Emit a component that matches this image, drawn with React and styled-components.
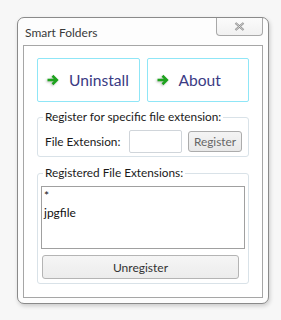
import React from "react";
import styled, { createGlobalStyle } from "styled-components";

const Global = createGlobalStyle`
  html, body { margin: 0; padding: 0; background: #f7f7f7; }
  body { font-family: Lato, "Noto Sans", sans-serif; }
  * { box-sizing: border-box; }
`;

const Page = styled.div`
  width: 281px;
  height: 320px;
  padding: 17px 0 0 17px;
`;

const Window = styled.div`
  width: 252px;
  height: 287px;
  border: 1px solid #8a8a8a;
  border-radius: 7px;
  background: #fdfdfd;
  box-shadow: 1px 2px 4px rgba(0, 0, 0, 0.18);
  display: flex;
  flex-direction: column;
`;

const TitleBar = styled.div`
  height: 27px;
  display: flex;
  justify-content: space-between;
  align-items: flex-start;
  padding: 0 5px 0 7px;
`;

const Title = styled.span`
  font-size: 12px;
  color: #3a3a3a;
  line-height: 27px;
  padding-top: 1px;
`;

const CloseButton = styled.div`
  width: 47px;
  height: 18px;
  border: 1px solid #a8a8a8;
  border-top: none;
  border-radius: 0 0 4px 4px;
  background: linear-gradient(#fbfbfb, #f1f1f1);
  display: flex;
  align-items: center;
  justify-content: center;
`;

const Client = styled.div`
  margin: 0 5px 5px 5px;
  height: 253px;
  border: 1px solid #a6a6a6;
  background: #ffffff;
  padding: 12px 13px 0 13px;
  display: flex;
  flex-direction: column;
`;

const BigButtons = styled.div`
  display: flex;
  gap: 7px;
  height: 44px;
`;

const BigButton = styled.div`
  flex: 1;
  border: 1px solid #8fe6f7;
  border-radius: 2px;
  background: #ffffff;
  display: flex;
  align-items: center;
  padding-left: 8px;
  gap: 10px;
  font-size: 15.6px;
  color: #3b3b84;
`;

const Group = styled.div`
  position: relative;
  border: 1px solid #d9e2e8;
  border-radius: 3px;
  margin-top: ${(p) => p.$top}px;
  height: ${(p) => p.$h}px;
  padding: ${(p) => p.$pad};
  display: flex;
  flex-direction: ${(p) => (p.$col ? "column" : "row")};
  align-items: ${(p) => (p.$col ? "stretch" : "center")};
`;

const Legend = styled.span`
  position: absolute;
  top: -9px;
  left: 5px;
  padding: 0 2px;
  background: #ffffff;
  font-size: 11.8px;
  line-height: 16px;
  color: #1a1a1a;
`;

const Label = styled.span`
  width: 84px;
  font-size: 11.8px;
  color: #1a1a1a;
`;

const TextInput = styled.div`
  width: 53px;
  height: 23px;
  border: 1px solid #d0d5da;
  border-radius: 2px;
  background: #fff;
`;

const SmallButton = styled.div`
  margin-left: 6px;
  width: 54px;
  height: 21px;
  border: 1px solid #acacac;
  border-radius: 3px;
  background: linear-gradient(#f4f4f4, #e8e8e8);
  font-size: 11.8px;
  color: #666;
  display: flex;
  align-items: center;
  justify-content: center;
`;

const ListBox = styled.div`
  height: 63px;
  border: 1px solid #a0a0a0;
  padding: 0 2px;
  font-size: 12px;
  line-height: 17px;
  color: #111;
`;

const WideButton = styled.div`
  margin: 6px 6px 0 1px;
  height: 24px;
  border: 1px solid #b4b4b4;
  border-radius: 3px;
  background: linear-gradient(#f5f5f5, #ececec);
  font-size: 12px;
  color: #333;
  display: flex;
  align-items: center;
  justify-content: center;
`;

const Arrow = () => (
  <svg width="13" height="12" viewBox="0 0 13 12" style={{ filter: "drop-shadow(-1px 1px 1px rgba(0,0,0,0.25))" }}>
    <path d="M1.5 6 H9.5" stroke="#1fa31f" strokeWidth="2.6" fill="none" />
    <path d="M6.5 1.8 L10.8 6 L6.5 10.2" stroke="#1fa31f" strokeWidth="2.6" fill="none" strokeLinejoin="miter" />
  </svg>
);

const CloseX = () => (
  <svg width="11" height="9" viewBox="0 0 11 9">
    <path d="M1.5 1 L9.5 8 M9.5 1 L1.5 8" stroke="#8a8a8a" strokeWidth="2.2" fill="none" />
    <path d="M1.5 1 L9.5 8 M9.5 1 L1.5 8" stroke="#e8e8e8" strokeWidth="0.8" fill="none" />
  </svg>
);

export default function App() {
  return (
    <>
      <Global />
      <Page>
        <Window>
          <TitleBar>
            <Title>Smart Folders</Title>
            <CloseButton>
              <CloseX />
            </CloseButton>
          </TitleBar>
          <Client>
            <BigButtons>
              <BigButton>
                <Arrow />
                Uninstall
              </BigButton>
              <BigButton>
                <Arrow />
                About
              </BigButton>
            </BigButtons>
            <Group $top={15} $h={40} $pad="12px 6px 3px 7px">
              <Legend>Register for specific file extension:</Legend>
              <Label>File Extension:</Label>
              <TextInput />
              <SmallButton>Register</SmallButton>
            </Group>
            <Group $top={16} $h={111} $pad="12px 3px 4px 3px" $col>
              <Legend>Registered File Extensions:</Legend>
              <ListBox>
                <div>*</div>
                <div>jpgfile</div>
              </ListBox>
              <WideButton>Unregister</WideButton>
            </Group>
          </Client>
        </Window>
      </Page>
    </>
  );
}
